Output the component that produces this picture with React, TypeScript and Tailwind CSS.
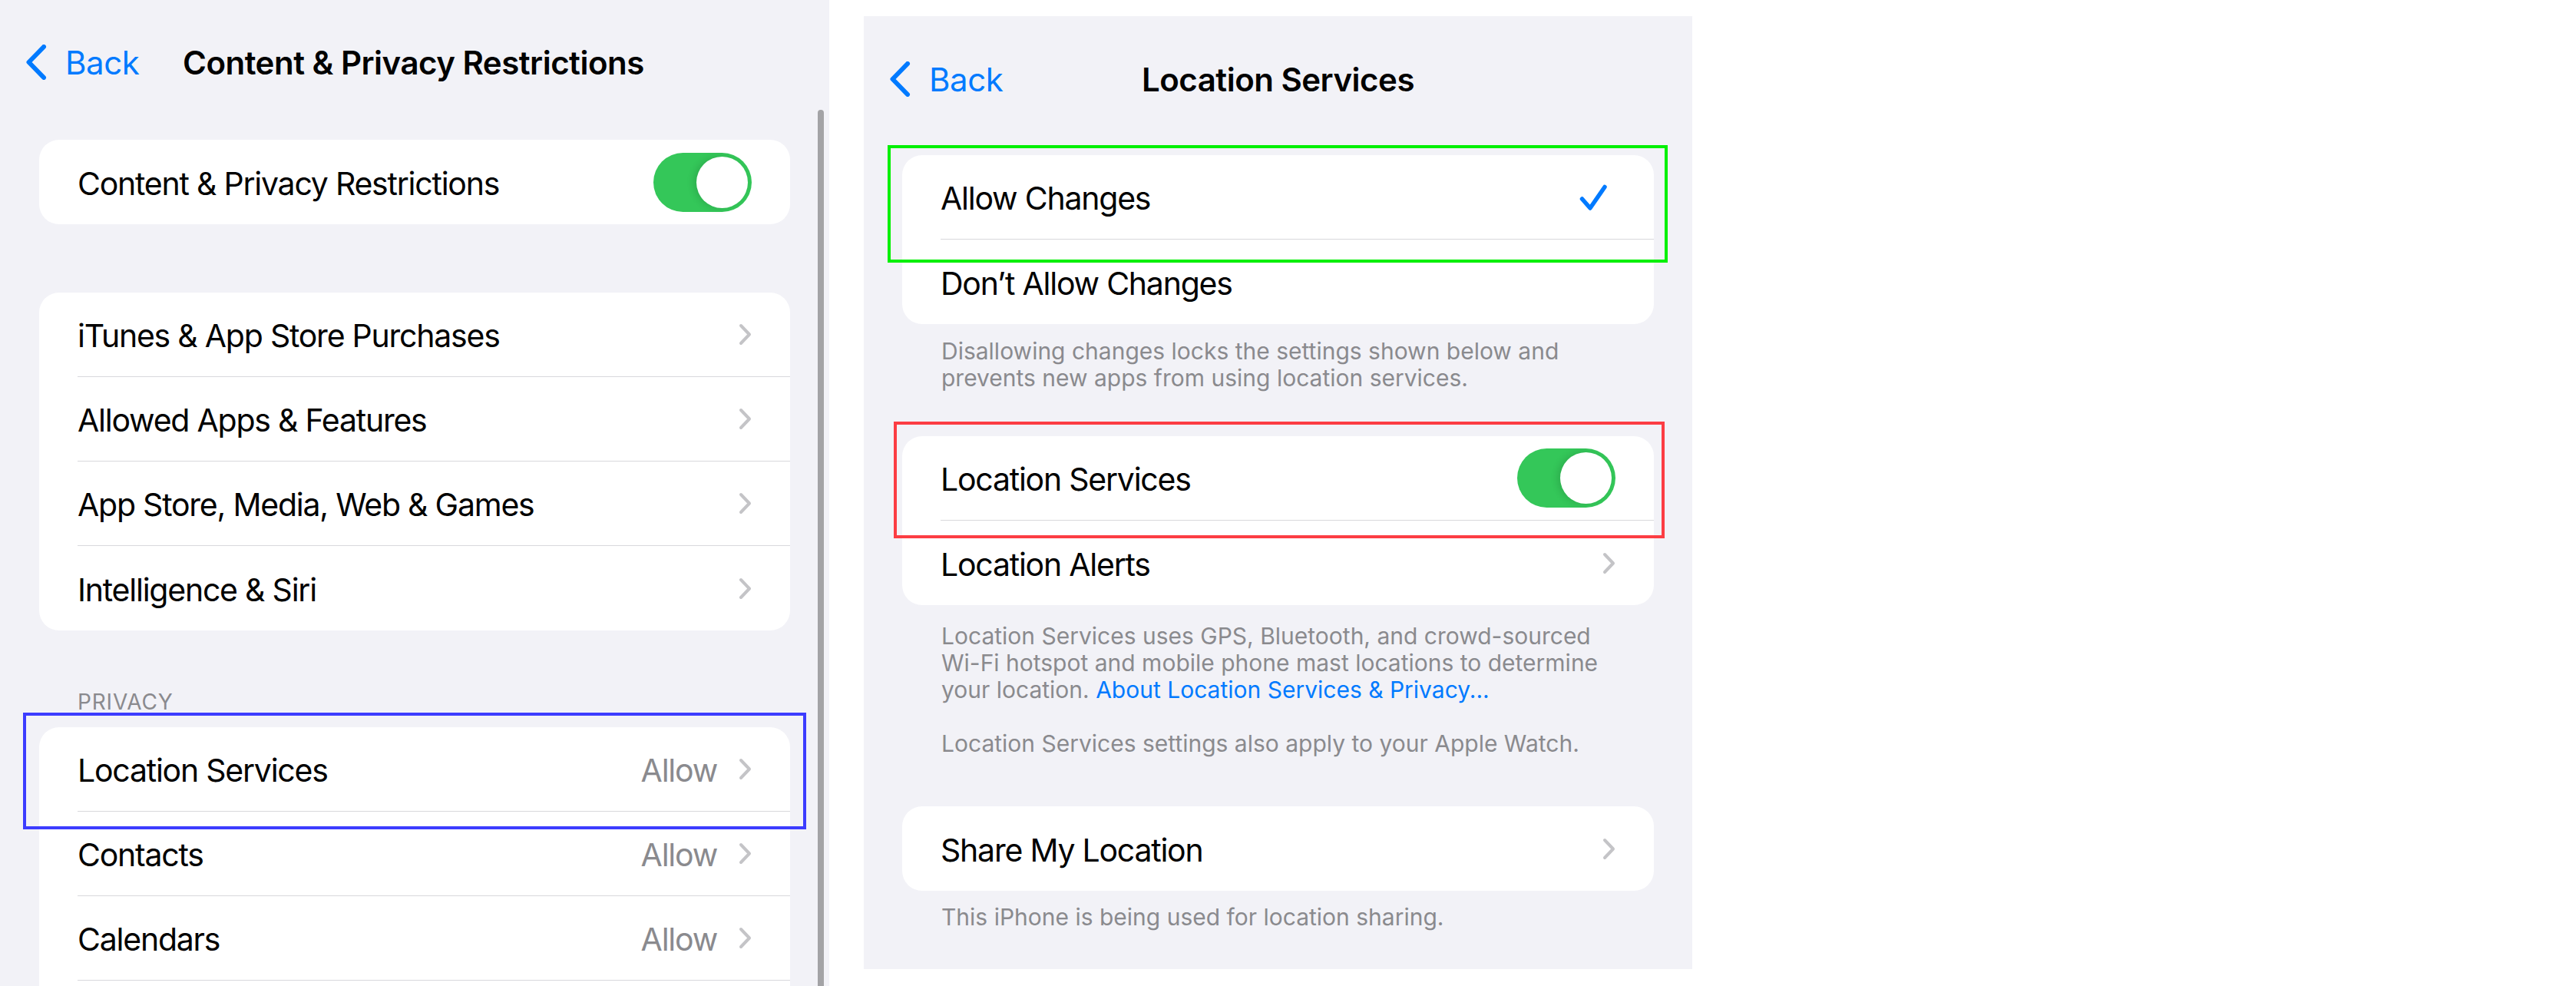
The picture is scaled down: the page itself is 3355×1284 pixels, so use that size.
import type { ReactNode } from "react"

function BackChevron() {
  return (
    <svg width="28" height="46" viewBox="0 0 28 46" fill="none">
      <path d="M24 3L4.5 23L24 43" stroke="#007aff" strokeWidth="6" strokeLinecap="round" strokeLinejoin="round" />
    </svg>
  )
}

function Chevron() {
  return (
    <svg width="17" height="29" viewBox="0 0 17 29" fill="none">
      <path d="M3 3L14 14.5L3 26" stroke="#c4c4c7" strokeWidth="4" strokeLinecap="round" strokeLinejoin="round" />
    </svg>
  )
}

function Check() {
  return (
    <svg width="36" height="34" viewBox="0 0 36 34" fill="none" className="mr-[11px]">
      <path d="M3.5 19L14 31L33 3.5" stroke="#007aff" strokeWidth="5.5" strokeLinecap="round" strokeLinejoin="round" />
    </svg>
  )
}

function Toggle() {
  return (
    <div className="flex h-[77px] w-[128px] items-center justify-end rounded-full bg-[#34c759] pr-[5px]">
      <div className="h-[67px] w-[67px] rounded-full bg-white shadow-[-4px_0_10px_rgba(0,0,0,0.12)]" />
    </div>
  )
}

function Row({ label, value, accessory, last }: { label: string; value?: string; accessory?: ReactNode; last?: boolean }) {
  return (
    <div className="flex h-[110px] pl-[50px]">
      <div className={"flex flex-1 items-center pr-[50px] " + (last ? "" : "border-b border-[#d8d8dc]")}>
        <span className="mt-[4px] flex-1 text-[41px] leading-none tracking-[-0.03em] text-black">{label}</span>
        {value && <span className="mr-[28px] mt-[4px] text-[41px] leading-none tracking-[-0.03em] text-[#8a8a8e]">{value}</span>}
        {accessory}
      </div>
    </div>
  )
}

function Card({ children }: { children: ReactNode }) {
  return <div className="overflow-hidden rounded-[26px] bg-white">{children}</div>
}

export default function App() {
  return (
    <div className="flex h-[1284px] w-[3355px] bg-white font-['Inter','Noto_Sans',sans-serif]">
      {/* left: Content & Privacy Restrictions */}
      <div className="relative h-[1284px] w-[1080px] shrink-0 overflow-hidden bg-[#f2f2f7]">
        <div className="flex h-[161px] items-center pl-[33px]">
          <div className="flex w-[205px] items-center gap-[24px]">
            <BackChevron />
            <span className="mt-[3px] text-[42px] leading-none tracking-[-0.01em] text-[#007aff]">Back</span>
          </div>
          <span className="mt-[3px] text-[42px] font-semibold leading-none tracking-[-0.012em] text-black">
            Content &amp; Privacy Restrictions
          </span>
        </div>

        <div className="px-[51px] pt-[21px]">
          <Card>
            <Row label="Content & Privacy Restrictions" accessory={<Toggle />} last />
          </Card>

          <div className="mt-[89px]">
            <Card>
              <Row label="iTunes & App Store Purchases" accessory={<Chevron />} />
              <Row label="Allowed Apps & Features" accessory={<Chevron />} />
              <Row label="App Store, Media, Web & Games" accessory={<Chevron />} />
              <Row label="Intelligence & Siri" accessory={<Chevron />} last />
            </Card>
          </div>

          <div className="pb-[19px] pl-[50px] pt-[79px] text-[28px] leading-none tracking-[0.03em] text-[#8a8a8e]">PRIVACY</div>

          <div className="relative">
            <Card>
              <Row label="Location Services" value="Allow" accessory={<Chevron />} />
              <Row label="Contacts" value="Allow" accessory={<Chevron />} />
              <Row label="Calendars" value="Allow" accessory={<Chevron />} />
              <div className="h-[110px]" />
            </Card>
            <div className="absolute left-[-21px] top-[-19px] h-[152px] w-[1020px] border-4 border-[#3c3cff]" />
          </div>
        </div>

        <div className="absolute bottom-0 right-[7px] top-[143px] w-[8px] rounded-t-full bg-[#a3a3a6]" />
      </div>

      <div className="w-[45px] shrink-0" />

      {/* right: Location Services */}
      <div className="mt-[21px] h-[1241px] w-[1079px] shrink-0 bg-[#f2f2f7]">
        <div className="grid h-[163px] grid-cols-[1fr_auto_1fr] items-center px-[33px]">
          <div className="flex items-center gap-[24px]">
            <BackChevron />
            <span className="mt-[3px] text-[42px] leading-none tracking-[-0.01em] text-[#007aff]">Back</span>
          </div>
          <span className="mt-[3px] text-[42px] font-semibold leading-none tracking-[-0.012em] text-black">Location Services</span>
          <div />
        </div>

        <div className="px-[50px] pt-[18px]">
          <div className="relative">
            <Card>
              <Row label="Allow Changes" accessory={<Check />} />
              <Row label="Don’t Allow Changes" last />
            </Card>
            <div className="absolute left-[-19px] top-[-13px] h-[153px] w-[1016px] border-4 border-[#00f000]" />
          </div>

          <p className="pl-[51px] pt-[18px] text-[30px] leading-[35px] text-[#8a8a8e]">
            Disallowing changes locks the settings shown below and
            <br />
            prevents new apps from using location services.
          </p>

          <div className="relative mt-[58px]">
            <Card>
              <Row label="Location Services" accessory={<Toggle />} />
              <Row label="Location Alerts" accessory={<Chevron />} last />
            </Card>
            <div className="absolute left-[-11px] top-[-19px] h-[152px] w-[1004px] border-4 border-[#fc3d43]" />
          </div>

          <div className="pl-[51px] pt-[23px] text-[30px] leading-[35px] text-[#8a8a8e]">
            <p>
              Location Services uses GPS, Bluetooth, and crowd-sourced
              <br />
              Wi-Fi hotspot and mobile phone mast locations to determine
              <br />
              your location. <span className="text-[#007aff]">About Location Services &amp; Privacy...</span>
            </p>
            <p className="mt-[35px]">Location Services settings also apply to your Apple Watch.</p>
          </div>

          <div className="mt-[64px]">
            <Card>
              <Row label="Share My Location" accessory={<Chevron />} last />
            </Card>
          </div>

          <p className="pl-[51px] pt-[17px] text-[30px] leading-[35px] text-[#8a8a8e]">
            This iPhone is being used for location sharing.
          </p>
        </div>
      </div>
    </div>
  )
}
